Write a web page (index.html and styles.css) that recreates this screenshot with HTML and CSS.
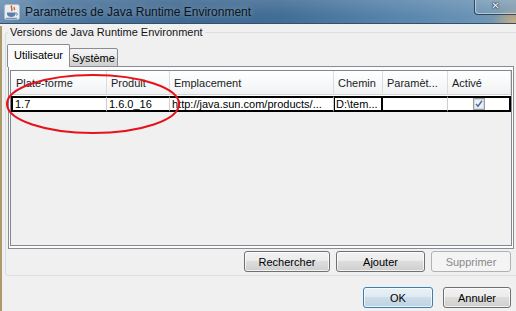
FILE: index.html
```html
<!doctype html>
<html lang="fr">
  <head>
    <meta charset="UTF-8" />
    <title>Paramètres de Java Runtime Environment</title>
    <link rel="stylesheet" href="styles.css">
  </head>
  <body>
    <div class="window">
      <div class="titlebar">
        <svg class="app-icon" viewBox="0 0 16 16" width="16" height="16">
          <rect x="0.5" y="0.5" width="15" height="15" rx="2" fill="#e9eef3" stroke="#a9b9c8" />
          <path d="M8 1.5c-2.5 2 1.5 3 -0.5 5.5M10.5 3c-1.2 1 0.8 1.8 -0.3 3" fill="none" stroke="#e0541c" stroke-width="1.4" />
          <path d="M3 8.5h8.5v1.5c0 2-2 3-4.2 3S3 12 3 10z" fill="#5b7fa6" />
          <path d="M11.5 9.2h1.2c1 0 1 2-0.4 2.2" fill="none" stroke="#5b7fa6" stroke-width="1" />
          <path d="M2 14.3h11" stroke="#5b7fa6" stroke-width="1" />
        </svg>
        <span class="title">Paramètres de Java Runtime Environment</span>
        <div class="close-btn"><span>✕</span></div>
      </div>

      <div class="content">
        <fieldset class="group">
          <legend>Versions de Java Runtime Environment</legend>

          <div class="tabs">
            <div class="tab tab-selected">Utilisateur</div>
            <div class="tab">Système</div>
          </div>

          <div class="tab-panel">
            <div class="scroll">
              <table class="jre-table">
                <colgroup>
                  <col class="col-platform" />
                  <col class="col-product" />
                  <col class="col-location" />
                  <col class="col-path" />
                  <col class="col-params" />
                  <col class="col-enabled" />
                </colgroup>
                <thead>
                  <tr>
                    <th>Plate-forme</th>
                    <th>Produit</th>
                    <th>Emplacement</th>
                    <th>Chemin</th>
                    <th>Paramèt...</th>
                    <th>Activé</th>
                  </tr>
                </thead>
                <tbody>
                  <tr>
                    <td>1.7</td>
                    <td>1.6.0_16</td>
                    <td>http://java.sun.com/products/...</td>
                    <td class="cell-focus">D:\tem...</td>
                    <td></td>
                    <td class="cell-check">
                      <svg viewBox="0 0 12 12" width="12" height="12">
                        <rect x="0.5" y="0.5" width="11" height="11" fill="#eef0f2" stroke="#9a9ea3" />
                        <rect x="1.5" y="1.5" width="9" height="9" fill="none" stroke="#d4d8dc" />
                        <path d="M3 6l2 2.3L9 2.8" fill="none" stroke="#4a6fb0" stroke-width="1.5" />
                      </svg>
                    </td>
                  </tr>
                </tbody>
              </table>
            </div>
          </div>

          <div class="actions">
            <button class="button btn-search">Rechercher</button>
            <button class="button btn-add">Ajouter</button>
            <button class="button btn-remove" disabled>Supprimer</button>
          </div>
        </fieldset>

        <div class="dialog-buttons">
          <button class="button button-default btn-ok">OK</button>
          <button class="button btn-cancel">Annuler</button>
        </div>
      </div>

      <!-- annotation tracée par-dessus la capture -->
      <svg class="annotation" viewBox="0 0 176 62" width="176" height="62">
        <ellipse cx="88" cy="31" rx="86" ry="29" fill="none" stroke="#e5121b" stroke-width="2" />
      </svg>
    </div>
  </body>
</html>
```

FILE: styles.css
```css
body {
  margin: 0;
  width: 516px;
  height: 311px;
  overflow: hidden;
  background-color: #f0f0f0;
  font-family: "Liberation Sans", Arial, sans-serif;
  font-size: 11px;
  color: #000;
}
.window {
  position: relative;
  height: 311px;
}
.titlebar {
  height: 23px;
  display: flex;
  align-items: center;
  border-bottom: 1px solid #34516c;
  background:
    radial-gradient(ellipse 22px 14px at 514px 22px, rgba(226, 180, 110, 0.75), rgba(226, 180, 110, 0)),
    linear-gradient(180deg, rgba(255, 255, 255, 0.12), rgba(255, 255, 255, 0) 70%),
    linear-gradient(90deg, #6c90b3 0%, #4c769d 10%, #3f6890 35%, #426d95 55%, #5884ab 76%, #6a93b5 92%, #7d99ad 100%);
}
.app-icon {
  margin-left: 4px;
  flex: none;
}
.title {
  margin-left: 5px;
  font-size: 12px;
  color: #0d141c;
  text-shadow: 0 0 6px rgba(255, 255, 255, 0.45);
  white-space: nowrap;
}
.close-btn {
  margin-left: auto;
  align-self: flex-start;
  margin-top: -4px;
  width: 42px;
  height: 19px;
  box-sizing: border-box;
  border: 1px solid rgba(25, 40, 60, 0.75);
  border-top: none;
  border-right: none;
  border-radius: 0 0 0 4px;
  box-shadow: inset 1px -1px 0 rgba(255, 255, 255, 0.45);
  background: linear-gradient(180deg, rgba(255, 255, 255, 0.1), rgba(255, 255, 255, 0.02));
  display: flex;
  align-items: center;
  justify-content: center;
}
.close-btn span {
  font-family: "DejaVu Sans", sans-serif;
  font-size: 10px;
  font-weight: bold;
  color: #fff;
  line-height: 10px;
  margin-top: 2px;
  text-shadow: 0 0 1px #1c2a3a, 0 0 1px #1c2a3a, 0 0 2px #1c2a3a;
}
.content {
  border-left: 2px solid #ac996c;
  padding-left: 3px;
  height: 287px;
}
.group {
  box-sizing: border-box;
  width: 516px;
  margin: 2px 0 0 0;
  padding: 5px 6px 3px 2px;
  border: 1px solid #d5dfe5;
  border-radius: 3px;
  min-width: 0;
}
.group legend {
  padding: 0 2px;
  line-height: 13px;
  color: #151515;
}
.tabs {
  display: flex;
  align-items: flex-end;
  height: 23px;
  margin-left: -1px;
  margin-bottom: -1px;
  position: relative;
  z-index: 1;
}
.tab {
  box-sizing: border-box;
  height: 19px;
  width: 49px;
  margin-left: -1px;
  border: 1px solid #898c95;
  border-radius: 2px 2px 0 0;
  background: linear-gradient(180deg, #f3f3f3 0%, #ebebeb 50%, #dcdcdc 50%, #cfcfcf 100%);
  display: flex;
  align-items: center;
  justify-content: center;
  padding-top: 1px;
}
.tab-selected {
  height: 23px;
  width: 63px;
  margin-left: 0;
  border-bottom: none;
  background: #fcfcfc;
  padding-top: 0;
  padding-bottom: 2px;
}
.tab-panel {
  box-sizing: border-box;
  width: 506px;
  padding: 3px 1px 2px 1px;
  border: 1px solid #898c95;
  background-color: #fcfcfc;
}
.scroll {
  height: 174px;
  border: 1px solid #828790;
  background-color: #f0f0f0;
}
.jre-table {
  width: 500px;
  table-layout: fixed;
  border-collapse: separate;
  border-spacing: 0;
}
.col-platform { width: 96px; }
.col-product { width: 63px; }
.col-location { width: 164px; }
.col-path { width: 49px; }
.col-params { width: 65px; }
.col-enabled { width: 63px; }
.jre-table th {
  box-sizing: border-box;
  height: 24px;
  padding: 0 0 0 4px;
  text-align: left;
  font-weight: normal;
  color: #1b1b1b;
  white-space: nowrap;
  overflow: hidden;
  border-right: 1px solid #dadcde;
  border-bottom: 1px solid #d5d5d5;
  box-shadow: 0 1px 0 #fff;
  background: linear-gradient(180deg, #ffffff 0%, #f7f8f9 60%, #f0f1f2 100%);
}
.jre-table th:first-child {
  padding-left: 5px;
}
.jre-table td {
  height: 12px;
  padding: 0 0 0 2px;
  line-height: 12px;
  white-space: nowrap;
  overflow: hidden;
  background-color: #fff;
  border-top: 2px solid #000;
  border-bottom: 2px solid #000;
  border-right: 1px solid #cfcfcf;
}
.jre-table tbody::before {
  content: "";
  display: table-row;
  height: 1px;
}
.jre-table td:first-child {
  border-left: 2px solid #000;
}
.jre-table td:last-child {
  border-right: 2px solid #000;
}
.cell-focus {
  box-shadow: inset 1px 0 0 #000, inset -1px 0 0 #000;
  border-right-color: #000 !important;
}
.cell-check {
  text-align: center;
  padding: 0 !important;
}
.cell-check svg {
  display: block;
  margin: 0 auto;
}
.actions {
  display: flex;
  justify-content: flex-end;
  gap: 6px;
  margin-top: 2px;
  padding-right: 3px;
}
.button {
  box-sizing: border-box;
  height: 21px;
  padding: 0;
  font-family: "Liberation Sans", Arial, sans-serif;
  font-size: 11px;
  color: #000;
  border: 1px solid #707070;
  border-radius: 3px;
  background: linear-gradient(180deg, #f2f2f2 0%, #ebebeb 50%, #dddddd 50%, #cfcfcf 100%);
  box-shadow: inset 0 0 0 1px rgba(255, 255, 255, 0.7);
}
.button:disabled {
  color: #8a8a8a;
  border-color: #adb2b5;
  background: #f4f4f4;
  box-shadow: none;
}
.button-default {
  border-color: #3c7fb1;
  background: linear-gradient(180deg, #e8f1f7 0%, #dde9f2 50%, #cddde9 50%, #bfd3e2 100%);
}
.btn-search { width: 86px; }
.btn-add { width: 89px; }
.btn-remove { width: 80px; }
.dialog-buttons {
  display: flex;
  justify-content: flex-end;
  gap: 10px;
  margin-top: 11px;
  padding-right: 5px;
}
.btn-ok { width: 70px; }
.btn-cancel { width: 68px; }
.annotation {
  position: absolute;
  left: 5px;
  top: 73px;
  pointer-events: none;
}
```
